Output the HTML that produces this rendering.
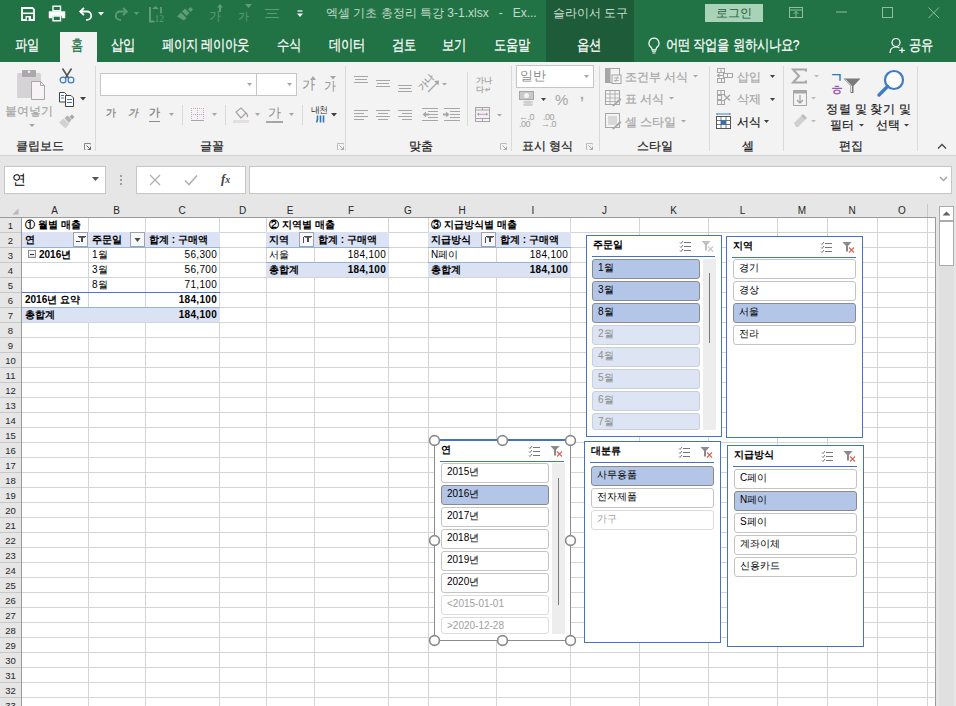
<!DOCTYPE html><html><head><meta charset="utf-8"><style>
*{margin:0;padding:0;box-sizing:border-box}
html,body{width:956px;height:706px;overflow:hidden;background:#e6e6e6;font-family:"Liberation Sans",sans-serif;color:#000}
.ab{position:absolute}
.t{position:absolute;white-space:nowrap;line-height:1}
#title{left:0;top:0;width:956px;height:62px;background:#217346}
.tab{position:absolute;top:38px;color:#fff;font-size:12px;white-space:nowrap;line-height:14px;transform:scaleY(1.22);transform-origin:50% 58%;-webkit-text-stroke:0.2px currentColor}
#ribbon{left:0;top:62px;width:956px;height:94px;background:#f3f3f3;border-bottom:1px solid #d4d4d4}
.rl{position:absolute;color:#1a1a1a;font-size:12px;white-space:nowrap;line-height:14px;-webkit-text-stroke:0.2px currentColor}
.dis{color:#a6a6a6}
.sep{position:absolute;width:1px;background:#dadada}
.hdr{position:absolute;background:#e6e6e6;color:#262626;font-size:10px;text-align:center;line-height:13px}
.cell{position:absolute;font-size:10px;line-height:15px;white-space:nowrap;color:#000}
.b{font-weight:bold}
.slicer{position:absolute;background:#fff;border:1px solid #4472c4}
.sh{position:absolute;left:6px;top:5px;font-size:11px;font-weight:bold;line-height:12px}
.sul{position:absolute;height:1px;background:#4472c4}
.item{position:absolute;height:20px;border:1px solid #c4c4c4;border-radius:3px;background:#fff;font-size:10px;line-height:16px;padding-left:5px;white-space:nowrap}
.sel{background:#b4c6e7;border-color:#8b8b8b}
.nod{background:#dde4f3;border-color:#c9cfdc;color:#8e8e8e}
.nodw{background:#fff;border-color:#dcdcdc;color:#a0a0a0}
.handle{position:absolute;width:11px;height:11px;border:1.5px solid #8c8c8c;border-radius:50%;background:#fff}
</style></head><body>
<div id="title" class="ab"></div>
<div class="ab" style="left:546px;top:0;width:88px;height:62px;background:#1e5c39"></div>
<div class="ab" style="left:60px;top:32px;width:37px;height:30px;background:#f3f3f3"></div>
<div class="tab" style="left:15px;color:#fff">파일</div>
<div class="tab" style="left:71px;color:#217346">홈</div>
<div class="tab" style="left:111px;color:#fff">삽입</div>
<div class="tab" style="left:162px;color:#fff">페이지 레이아웃</div>
<div class="tab" style="left:277px;color:#fff">수식</div>
<div class="tab" style="left:329px;color:#fff">데이터</div>
<div class="tab" style="left:392px;color:#fff">검토</div>
<div class="tab" style="left:442px;color:#fff">보기</div>
<div class="tab" style="left:494px;color:#fff">도움말</div>
<div class="tab" style="left:577px;color:#fff">옵션</div>
<div class="tab" style="left:666px;">어떤 작업을 원하시나요?</div>
<div class="tab" style="left:909px;">공유</div>
<div class="t" style="left:326px;top:7px;font-size:12px;color:#c4dacb">엑셀 기초 총정리 특강 3-1.xlsx&nbsp;&nbsp; -&nbsp;&nbsp; Ex...</div>
<div class="t" style="left:553px;top:7px;font-size:12px;color:#c9dccf">슬라이서 도구</div>
<div class="ab" style="left:705px;top:4px;width:58px;height:18px;background:#a9d3b9"></div>
<div class="t" style="left:716px;top:7px;font-size:12px;color:#1e5c39">로그인</div>
<div id="ribbon" class="ab"></div>
<div class="rl" style="left:16px;top:139px">클립보드</div>
<div class="rl" style="left:200px;top:139px">글꼴</div>
<div class="rl" style="left:409px;top:139px">맞춤</div>
<div class="rl" style="left:522px;top:139px">표시 형식</div>
<div class="rl" style="left:637px;top:139px">스타일</div>
<div class="rl" style="left:742px;top:139px">셀</div>
<div class="rl" style="left:839px;top:139px">편집</div>
<div class="sep" style="left:95px;top:66px;height:85px"></div>
<div class="sep" style="left:345px;top:66px;height:85px"></div>
<div class="sep" style="left:511px;top:66px;height:85px"></div>
<div class="sep" style="left:599px;top:66px;height:85px"></div>
<div class="sep" style="left:709px;top:66px;height:85px"></div>
<div class="sep" style="left:783px;top:66px;height:85px"></div>
<div class="sep" style="left:917px;top:66px;height:85px"></div>
<svg class="ab" style="left:20px;top:6px" width="16" height="16" viewBox="0 0 16 16"><path d="M2 2h10.5l1.5 1.5V14H2z" fill="none" stroke="#fff" stroke-width="1.8"/><path d="M3 7.3h10" stroke="#fff" stroke-width="1.6"/><rect x="5.5" y="10" width="5.5" height="4.5" fill="#fff"/><rect x="6.8" y="11.3" width="1.8" height="3.2" fill="#217346"/></svg>
<svg class="ab" style="left:48px;top:5px" width="18" height="17" viewBox="0 0 18 17"><rect x="5" y="1.2" width="7.5" height="4.5" fill="none" stroke="#fff" stroke-width="1.4"/><path d="M1 6.5h16v6.5h-3v-2.5H4V13H1z" fill="#fff" stroke="#fff" stroke-width="0.5" stroke-linejoin="round"/><rect x="5" y="11" width="7.5" height="4.8" fill="none" stroke="#fff" stroke-width="1.4"/></svg>
<svg class="ab" style="left:78px;top:6px" width="16" height="15" viewBox="0 0 16 15"><path d="M2.5 5.5h6.5a4.2 4.2 0 0 1 0 8.4H8" fill="none" stroke="#fff" stroke-width="1.8"/><path d="M6 1.8L2.2 5.5L6 9.2" fill="none" stroke="#fff" stroke-width="1.8"/></svg>
<svg class="ab" style="left:98px;top:12px" width="7" height="4" viewBox="0 0 7 4"><path d="M0 0h6L3 3.5z" fill="#fff"/></svg>
<svg class="ab" style="left:113px;top:6px" width="16" height="15" viewBox="0 0 16 15"><path d="M13.5 5.5H7a4.2 4.2 0 0 0 0 8.4h1" fill="none" stroke="#5e9d77" stroke-width="1.8"/><path d="M10 1.8l3.8 3.7L10 9.2" fill="none" stroke="#5e9d77" stroke-width="1.8"/></svg>
<svg class="ab" style="left:134px;top:12px" width="6" height="4" viewBox="0 0 6 4"><path d="M0 0h5L2.5 3z" fill="#5e9d77"/></svg>
<svg class="ab" style="left:148px;top:5px" width="18" height="18" viewBox="0 0 18 18"><path d="M2 2v14.5h4.5" fill="none" stroke="#5e9d77" stroke-width="2"/><path d="M4 4l3.5-3 3.5 3z" fill="#5e9d77"/><path d="M13 2v6.5" stroke="#5e9d77" stroke-width="1.8"/><text x="6.5" y="17" font-size="9.5" fill="#5e9d77" font-family="Liberation Serif">12</text></svg>
<svg class="ab" style="left:176px;top:6px" width="19" height="15" viewBox="0 0 19 15"><path d="M1 10.5L5 6.5 10.5 12 8 14.5z" fill="#5e9d77"/><path d="M6 5.5L9 2.5 13.5 7 10.5 10z" fill="#5e9d77"/><path d="M12 3.5L14.5 1 17 3.5 14.5 6z" fill="#5e9d77"/></svg>
<div class="t" style="left:209px;top:10px;font-size:12px;color:#5e9d77">가</div>
<svg class="ab" style="left:217px;top:4px" width="6" height="8" viewBox="0 0 6 8"><path d="M3 0L6 3.5H4V8H2V3.5H0z" fill="#5e9d77"/></svg>
<div class="t" style="left:238px;top:11px;font-size:11px;color:#5e9d77">가</div>
<svg class="ab" style="left:245px;top:4px" width="7" height="5" viewBox="0 0 7 5"><path d="M0 0h7L3.5 4z" fill="#5e9d77"/></svg>
<svg class="ab" style="left:264px;top:8px" width="16" height="12" viewBox="0 0 16 12"><path d="M1 1.5h14M3 5.5h10M1 9.5h14" stroke="#5e9d77" stroke-width="1.2"/></svg>
<svg class="ab" style="left:296px;top:10px" width="8" height="8" viewBox="0 0 8 8"><path d="M1.5 1h5" stroke="#fff" stroke-width="1.2"/><path d="M1 3.5h6L4 7z" fill="#fff"/></svg>
<svg class="ab" style="left:789px;top:7px" width="14" height="11" viewBox="0 0 14 11"><rect x="0.5" y="0.5" width="13" height="10" fill="none" stroke="#8fbf9f"/><path d="M0.5 3h13M7 10V4.5M4.8 6.8L7 4.5l2.2 2.3" fill="none" stroke="#8fbf9f"/></svg>
<svg class="ab" style="left:836px;top:11px" width="12" height="2" viewBox="0 0 12 2"><path d="M0 1h11" stroke="#8fbf9f" stroke-width="1"/></svg>
<svg class="ab" style="left:882px;top:7px" width="11" height="11" viewBox="0 0 11 11"><rect x="0.5" y="0.5" width="10" height="10" fill="none" stroke="#8fbf9f"/></svg>
<svg class="ab" style="left:928px;top:7px" width="12" height="12" viewBox="0 0 12 12"><path d="M0.5 0.5l10.5 10.5M11 0.5L0.5 11" stroke="#8fbf9f" stroke-width="1"/></svg>
<svg class="ab" style="left:647px;top:37px" width="14" height="17" viewBox="0 0 14 17"><path d="M7 1.2a5 5 0 0 0-3 9c.8.8 1 1.6 1 2.6h4c0-1 .2-1.8 1-2.6a5 5 0 0 0-3-9z" fill="none" stroke="#fff" stroke-width="1.2"/><path d="M5 14.2h4M5.5 16h3" stroke="#fff" stroke-width="1.1"/></svg>
<svg class="ab" style="left:889px;top:37px" width="17" height="17" viewBox="0 0 17 17"><circle cx="7" cy="5.5" r="4" fill="none" stroke="#fff" stroke-width="1.2"/><path d="M1 16c0-4 2.5-6 6-6 1.5 0 2.6.4 3.4 1" fill="none" stroke="#fff" stroke-width="1.2"/><path d="M13 10.5v5.5M10.2 13.3h5.6" stroke="#fff" stroke-width="1.2"/></svg>
<svg class="ab" style="left:16px;top:69px" width="30" height="32" viewBox="0 0 30 32"><rect x="1" y="4" width="24" height="25" rx="1.5" fill="#d6d3d6"/><rect x="6" y="1" width="14" height="7" rx="1" fill="#aaa8aa"/><circle cx="13" cy="2.8" r="1.2" fill="#f3f3f3"/><path d="M15.5 12.5h9l4 4v14h-13z" fill="#f6f2f6" stroke="#a8a6a8" stroke-width="1"/><path d="M24.5 12.5v4h4" fill="none" stroke="#a8a6a8" stroke-width="1"/></svg>
<div class="rl dis" style="left:5px;top:104px">붙여넣기</div>
<svg class="ab" style="left:29px;top:124px" width="6" height="4" viewBox="0 0 6 4"><path d="M0 0h6L3 3z" fill="#a6a6a6"/></svg>
<svg class="ab" style="left:59px;top:68px" width="16" height="16" viewBox="0 0 16 16"><path d="M3.5 0.5L9.5 10M12.5 0.5L6.5 10" stroke="#555" stroke-width="1.6"/><circle cx="4" cy="12" r="2.9" fill="none" stroke="#3a7bc8" stroke-width="1.2"/><circle cx="12" cy="12" r="2.9" fill="none" stroke="#3a7bc8" stroke-width="1.2"/></svg>
<svg class="ab" style="left:58px;top:91px" width="17" height="16" viewBox="0 0 17 16"><path d="M1.5 1.5h5l2 2v7.5h-7z" fill="#fff" stroke="#404040" stroke-width="1"/><path d="M3 4.5h3M3 7h3" stroke="#3a7bc8" stroke-width="1"/><path d="M7.5 4.5h5.5l2.5 2.5v8.5h-8z" fill="#fff" stroke="#404040" stroke-width="1"/><path d="M9 8.5h5M9 11.5h5" stroke="#3a7bc8" stroke-width="1"/></svg>
<svg class="ab" style="left:80px;top:97px" width="7" height="5" viewBox="0 0 7 5"><path d="M0 0h6L3 3.5z" fill="#404040"/></svg>
<svg class="ab" style="left:58px;top:114px" width="18" height="16" viewBox="0 0 18 16"><path d="M1 8.5L5.5 4.5 11 10 7.5 14.5z" fill="#d2d0d2"/><path d="M6.5 4L9.5 1.5 13.5 5.5 11 9z" fill="#b4b2b4"/><path d="M11.5 2.5L14 0.5 16.5 3 14 5.5z" fill="#a8a6a8"/></svg>
<svg class="ab" style="left:84px;top:143px" width="8" height="8" viewBox="0 0 8 8"><path d="M0.5 0.5h6v1M0.5 0.5v6h1" fill="none" stroke="#888" stroke-width="1"/><path d="M2.5 2.5l4 4M6.5 3.5v3h-3" fill="none" stroke="#666" stroke-width="1"/></svg>
<div class="ab" style="left:100px;top:73px;width:157px;height:23px;background:#fff;border:1px solid #c6c6c6"></div>
<div class="ab" style="left:256px;top:73px;width:41px;height:23px;background:#fff;border:1px solid #c6c6c6"></div>
<svg class="ab" style="left:247px;top:83px" width="6" height="4" viewBox="0 0 6 4"><path d="M0 0h5L2.5 3z" fill="#a6a6a6"/></svg>
<svg class="ab" style="left:287px;top:83px" width="6" height="4" viewBox="0 0 6 4"><path d="M0 0h5L2.5 3z" fill="#a6a6a6"/></svg>
<div class="t" style="left:302px;top:78px;font-size:13px;color:#8d8d8d">가</div>
<svg class="ab" style="left:310px;top:76px" width="6" height="5" viewBox="0 0 6 5"><path d="M3 0L6 4H0z" fill="#a6a6a6"/></svg>
<div class="t" style="left:324px;top:80px;font-size:12px;color:#8d8d8d">가</div>
<svg class="ab" style="left:330px;top:76px" width="7" height="4" viewBox="0 0 7 4"><path d="M0 0h6L3 3.5z" fill="#a6a6a6"/></svg>
<div class="t b" style="left:106px;top:108px;font-size:10px;color:#8d8d8d">가</div>
<div class="t b" style="left:128px;top:108px;font-size:10px;color:#8d8d8d;font-style:italic">가</div>
<div class="t b" style="left:149px;top:107px;font-size:11px;color:#8d8d8d">가</div>
<div class="ab" style="left:149px;top:121px;width:11px;height:1px;background:#8d8d8d"></div>
<svg class="ab" style="left:169px;top:113px" width="6" height="4" viewBox="0 0 6 4"><path d="M0 0h5L2.5 3z" fill="#a6a6a6"/></svg>
<svg class="ab" style="left:212px;top:113px" width="6" height="4" viewBox="0 0 6 4"><path d="M0 0h5L2.5 3z" fill="#a6a6a6"/></svg>
<svg class="ab" style="left:255px;top:113px" width="6" height="4" viewBox="0 0 6 4"><path d="M0 0h5L2.5 3z" fill="#a6a6a6"/></svg>
<svg class="ab" style="left:289px;top:113px" width="6" height="4" viewBox="0 0 6 4"><path d="M0 0h5L2.5 3z" fill="#a6a6a6"/></svg>
<div class="sep" style="left:182px;top:105px;height:20px"></div>
<div class="sep" style="left:225px;top:105px;height:20px"></div>
<div class="sep" style="left:302px;top:105px;height:20px"></div>
<svg class="ab" style="left:191px;top:108px" width="13" height="14" viewBox="0 0 13 14"><g fill="#c9a9c1"><rect x="0" y="0" width="1" height="1"/><rect x="0" y="2" width="1" height="1"/><rect x="0" y="4" width="1" height="1"/><rect x="0" y="6" width="1" height="1"/><rect x="0" y="8" width="1" height="1"/><rect x="0" y="10" width="1" height="1"/><rect x="0" y="12" width="1" height="1"/><rect x="2" y="0" width="1" height="1"/><rect x="2" y="6" width="1" height="1"/><rect x="2" y="12" width="1" height="1"/><rect x="4" y="0" width="1" height="1"/><rect x="4" y="6" width="1" height="1"/><rect x="4" y="12" width="1" height="1"/><rect x="6" y="0" width="1" height="1"/><rect x="6" y="2" width="1" height="1"/><rect x="6" y="4" width="1" height="1"/><rect x="6" y="6" width="1" height="1"/><rect x="6" y="8" width="1" height="1"/><rect x="6" y="10" width="1" height="1"/><rect x="6" y="12" width="1" height="1"/><rect x="8" y="0" width="1" height="1"/><rect x="8" y="6" width="1" height="1"/><rect x="8" y="12" width="1" height="1"/><rect x="10" y="0" width="1" height="1"/><rect x="10" y="6" width="1" height="1"/><rect x="10" y="12" width="1" height="1"/><rect x="12" y="0" width="1" height="1"/><rect x="12" y="2" width="1" height="1"/><rect x="12" y="4" width="1" height="1"/><rect x="12" y="6" width="1" height="1"/><rect x="12" y="8" width="1" height="1"/><rect x="12" y="10" width="1" height="1"/><rect x="12" y="12" width="1" height="1"/></g><rect x="0" y="12" width="13" height="1" fill="#a6a6a6"/></svg>
<svg class="ab" style="left:232px;top:107px" width="18" height="17" viewBox="0 0 18 17"><path d="M4 5l5-4 5 5-5 5z" fill="none" stroke="#a6a6a6" stroke-width="1.2"/><path d="M14 6c1.5 1.5 2 3 1 4" stroke="#a6a6a6" stroke-width="1.2" fill="none"/><rect x="1" y="13" width="16" height="3" fill="#e6dde4"/></svg>
<div class="t" style="left:268px;top:106px;font-size:13px;color:#8d8d8d">가</div>
<div class="ab" style="left:266px;top:121px;width:17px;height:2px;background:#a6a6a6"></div>
<div class="t" style="left:311px;top:106px;font-size:8.5px;color:#333;letter-spacing:-1px">내천</div>
<svg class="ab" style="left:316px;top:115px" width="9" height="8" viewBox="0 0 9 8"><path d="M1.5 0.5v4L0.5 7.5M4.5 0.5v7M7.5 0.5v7" fill="none" stroke="#2e75b6" stroke-width="1.6"/></svg>
<svg class="ab" style="left:331px;top:113px" width="7" height="4" viewBox="0 0 7 4"><path d="M0 0h6L3 3.5z" fill="#404040"/></svg>
<svg class="ab" style="left:337px;top:143px" width="8" height="8" viewBox="0 0 8 8"><path d="M0.5 0.5h6v1M0.5 0.5v6h1" fill="none" stroke="#bbb" stroke-width="1"/><path d="M2.5 2.5l4 4M6.5 3.5v3h-3" fill="none" stroke="#aaa" stroke-width="1"/></svg>
<div class="ab" style="left:354px;top:76px;width:14px;height:1px;background:#a6a6a6"></div>
<div class="ab" style="left:355px;top:79px;width:12px;height:1px;background:#a6a6a6"></div>
<div class="ab" style="left:354px;top:82px;width:14px;height:1px;background:#a6a6a6"></div>
<div class="ab" style="left:376px;top:80px;width:14px;height:1px;background:#a6a6a6"></div>
<div class="ab" style="left:377px;top:83px;width:12px;height:1px;background:#a6a6a6"></div>
<div class="ab" style="left:376px;top:86px;width:14px;height:1px;background:#a6a6a6"></div>
<div class="ab" style="left:398px;top:85px;width:14px;height:1px;background:#a6a6a6"></div>
<div class="ab" style="left:399px;top:88px;width:12px;height:1px;background:#a6a6a6"></div>
<div class="ab" style="left:398px;top:91px;width:14px;height:1px;background:#a6a6a6"></div>
<div class="ab" style="left:354px;top:110px;width:14px;height:1px;background:#a6a6a6"></div>
<div class="ab" style="left:354px;top:113px;width:10px;height:1px;background:#a6a6a6"></div>
<div class="ab" style="left:354px;top:116px;width:14px;height:1px;background:#a6a6a6"></div>
<div class="ab" style="left:354px;top:119px;width:10px;height:1px;background:#a6a6a6"></div>
<div class="ab" style="left:376px;top:110px;width:14px;height:1px;background:#a6a6a6"></div>
<div class="ab" style="left:378px;top:113px;width:10px;height:1px;background:#a6a6a6"></div>
<div class="ab" style="left:376px;top:116px;width:14px;height:1px;background:#a6a6a6"></div>
<div class="ab" style="left:378px;top:119px;width:10px;height:1px;background:#a6a6a6"></div>
<div class="ab" style="left:398px;top:110px;width:14px;height:1px;background:#a6a6a6"></div>
<div class="ab" style="left:402px;top:113px;width:10px;height:1px;background:#a6a6a6"></div>
<div class="ab" style="left:398px;top:116px;width:14px;height:1px;background:#a6a6a6"></div>
<div class="ab" style="left:402px;top:119px;width:10px;height:1px;background:#a6a6a6"></div>
<div class="ab" style="left:422px;top:108px;width:16px;height:1px;background:#a6a6a6"></div>
<div class="ab" style="left:428px;top:111px;width:10px;height:1px;background:#a6a6a6"></div>
<div class="ab" style="left:428px;top:114px;width:10px;height:1px;background:#a6a6a6"></div>
<div class="ab" style="left:428px;top:117px;width:10px;height:1px;background:#a6a6a6"></div>
<div class="ab" style="left:422px;top:120px;width:16px;height:1px;background:#a6a6a6"></div>
<svg class="ab" style="left:422px;top:110px" width="7" height="9" viewBox="0 0 7 9"><path d="M0.5 4.5L4 1.5v2h3v2H4v2z" fill="#a6a6a6"/></svg>
<div class="ab" style="left:444px;top:108px;width:16px;height:1px;background:#a6a6a6"></div>
<div class="ab" style="left:450px;top:111px;width:10px;height:1px;background:#a6a6a6"></div>
<div class="ab" style="left:450px;top:114px;width:10px;height:1px;background:#a6a6a6"></div>
<div class="ab" style="left:450px;top:117px;width:10px;height:1px;background:#a6a6a6"></div>
<div class="ab" style="left:444px;top:120px;width:16px;height:1px;background:#a6a6a6"></div>
<svg class="ab" style="left:443px;top:110px" width="7" height="9" viewBox="0 0 7 9"><path d="M6.5 4.5L3 1.5v2H0v2h3v2z" fill="#a6a6a6"/></svg>
<div class="t" style="left:423px;top:83px;font-size:9px;font-weight:bold;color:#a6a6a6;transform:rotate(-45deg);transform-origin:0 100%">가나</div>
<svg class="ab" style="left:427px;top:79px" width="13" height="14" viewBox="0 0 13 14"><path d="M1 13L11 3" stroke="#a6a6a6" stroke-width="1.3" fill="none"/><path d="M12 1.5L11.5 6.5 7 2z" fill="#a6a6a6"/></svg>
<svg class="ab" style="left:442px;top:83px" width="6" height="3" viewBox="0 0 6 3"><path d="M0 0h5L2.5 2.5z" fill="#a6a6a6"/></svg>
<div class="t b" style="left:476px;top:76px;font-size:8px;color:#a6a6a6;line-height:9px">가나<br>다<span style="font-size:7px;margin-left:1px">↵</span></div>
<div class="sep" style="left:467px;top:72px;height:54px"></div>
<svg class="ab" style="left:475px;top:107px" width="16" height="16" viewBox="0 0 16 16"><rect x="0.5" y="0.5" width="14" height="14" fill="#f6eef6" stroke="#a6a6a6"/><path d="M0.5 3h14M0.5 11.5h14M7.5 0.5v2.5M7.5 11.5v3" fill="none" stroke="#a6a6a6"/><path d="M2.5 7.25h10" stroke="#a6a6a6"/><path d="M2 7.25l2-1.8v3.6zM13 7.25l-2-1.8v3.6z" fill="#a6a6a6"/></svg>
<svg class="ab" style="left:497px;top:114px" width="6" height="3" viewBox="0 0 6 3"><path d="M0 0h5L2.5 2.5z" fill="#a6a6a6"/></svg>
<svg class="ab" style="left:500px;top:143px" width="8" height="8" viewBox="0 0 8 8"><path d="M0.5 0.5h6v1M0.5 0.5v6h1" fill="none" stroke="#bbb" stroke-width="1"/><path d="M2.5 2.5l4 4M6.5 3.5v3h-3" fill="none" stroke="#aaa" stroke-width="1"/></svg>
<div class="ab" style="left:516px;top:65px;width:78px;height:23px;background:#fff;border:1px solid #c6c6c6"></div>
<div class="t" style="left:520px;top:69px;font-size:13px;color:#8d8d8d">일반</div>
<svg class="ab" style="left:584px;top:75px" width="6" height="4" viewBox="0 0 6 4"><path d="M0 0h5L2.5 3z" fill="#a6a6a6"/></svg>
<svg class="ab" style="left:519px;top:91px" width="17" height="16" viewBox="0 0 17 16"><rect x="0.5" y="0.5" width="14" height="8" fill="#c8c8c8" stroke="#a6a6a6"/><circle cx="7.5" cy="4.5" r="2.5" fill="#f3f3f3"/><ellipse cx="9" cy="11" rx="5" ry="1.5" fill="#d0d0d0"/><ellipse cx="9" cy="13.5" rx="5" ry="1.5" fill="#d0d0d0"/></svg>
<svg class="ab" style="left:541px;top:98px" width="6" height="4" viewBox="0 0 6 4"><path d="M0 0h5L2.5 3z" fill="#404040"/></svg>
<div class="t" style="left:555px;top:92px;font-size:15px;color:#a6a6a6">%</div>
<div class="t b" style="left:580px;top:87px;font-size:14px;color:#a6a6a6">,</div>
<div class="t" style="left:519px;top:114px;font-size:9px;color:#a0a0a0;line-height:7px;letter-spacing:-0.5px">←.0<br>.00</div>
<div class="t" style="left:541px;top:114px;font-size:9px;color:#a0a0a0;line-height:7px;letter-spacing:-0.5px">&nbsp;.00<br>→.0</div>
<svg class="ab" style="left:586px;top:143px" width="8" height="8" viewBox="0 0 8 8"><path d="M0.5 0.5h6v1M0.5 0.5v6h1" fill="none" stroke="#bbb" stroke-width="1"/><path d="M2.5 2.5l4 4M6.5 3.5v3h-3" fill="none" stroke="#aaa" stroke-width="1"/></svg>
<svg class="ab" style="left:605px;top:68px" width="17" height="16" viewBox="0 0 17 16"><rect x="0.5" y="0.5" width="14" height="14" fill="#f3f3f3" stroke="#a6a6a6"/><rect x="0.5" y="0.5" width="5" height="14" fill="#a6a6a6"/><rect x="7" y="7" width="9" height="8.5" fill="#f3f3f3" stroke="#a6a6a6"/><path d="M9 10h5M9 12.5h5M12.5 8.5l-2 5.5" stroke="#a6a6a6" stroke-width="0.8"/></svg>
<div class="rl dis" style="left:625px;top:70px">조건부 서식</div>
<svg class="ab" style="left:693px;top:75px" width="6" height="3" viewBox="0 0 6 3"><path d="M0 0h5L2.5 2.5z" fill="#a6a6a6"/></svg>
<svg class="ab" style="left:605px;top:90px" width="17" height="17" viewBox="0 0 17 17"><rect x="0.5" y="0.5" width="14" height="14" fill="#f3f3f3" stroke="#a6a6a6"/><path d="M0.5 4h14M0.5 8h14M0.5 11.5h14M5 0.5v14M10 0.5v14" stroke="#a6a6a6" stroke-width="0.8"/><path d="M7 16l8-8 1.5 1.5-8 7z" fill="#a6a6a6"/></svg>
<div class="rl dis" style="left:625px;top:92px">표 서식</div>
<svg class="ab" style="left:669px;top:97px" width="6" height="3" viewBox="0 0 6 3"><path d="M0 0h5L2.5 2.5z" fill="#a6a6a6"/></svg>
<svg class="ab" style="left:605px;top:113px" width="17" height="17" viewBox="0 0 17 17"><rect x="0.5" y="0.5" width="14" height="14" fill="#f3f3f3" stroke="#a6a6a6"/><rect x="3" y="3" width="9" height="9" fill="#d8d8d8"/><path d="M7 16l8-8 1.5 1.5-8 7z" fill="#a6a6a6"/></svg>
<div class="rl dis" style="left:625px;top:115px">셀 스타일</div>
<svg class="ab" style="left:681px;top:120px" width="6" height="3" viewBox="0 0 6 3"><path d="M0 0h5L2.5 2.5z" fill="#a6a6a6"/></svg>
<svg class="ab" style="left:716px;top:68px" width="18" height="16" viewBox="0 0 18 16"><g fill="none" stroke="#a6a6a6" stroke-width="1"><rect x="1.5" y="0.5" width="7" height="4"/><rect x="1.5" y="10.5" width="4" height="4"/><rect x="5.5" y="10.5" width="3" height="4"/><rect x="7.5" y="5.5" width="4" height="4"/><rect x="11.5" y="5.5" width="5" height="4"/><path d="M5 1v3.5"/></g><path d="M0.5 7.5L3.5 5v5z" fill="#a6a6a6"/><path d="M3 7.5h4.5" stroke="#a6a6a6"/></svg>
<div class="rl dis" style="left:737px;top:70px">삽입</div>
<svg class="ab" style="left:770px;top:75px" width="6" height="4" viewBox="0 0 6 4"><path d="M0 0h5L2.5 3z" fill="#404040"/></svg>
<svg class="ab" style="left:716px;top:90px" width="18" height="16" viewBox="0 0 18 16"><g fill="none" stroke="#a6a6a6" stroke-width="1"><rect x="1.5" y="0.5" width="7" height="4"/><rect x="1.5" y="10.5" width="4" height="4"/><rect x="5.5" y="10.5" width="3" height="4"/><rect x="1.5" y="5.5" width="4" height="4"/><path d="M5 1v3.5"/></g><path d="M8 5l6 5.5M14 5l-6 5.5" stroke="#a6a6a6" stroke-width="1.3"/></svg>
<div class="rl dis" style="left:737px;top:92px">삭제</div>
<svg class="ab" style="left:770px;top:98px" width="6" height="4" viewBox="0 0 6 4"><path d="M0 0h5L2.5 3z" fill="#404040"/></svg>
<svg class="ab" style="left:716px;top:113px" width="17" height="17" viewBox="0 0 17 17"><rect x="0.5" y="3.5" width="14" height="12" fill="#fff" stroke="#555"/><path d="M0.5 7.5h14M0.5 11.5h14M5 3.5v12M10 3.5v12" stroke="#555" stroke-width="0.8"/><rect x="5" y="7.5" width="5" height="4" fill="#2e75b6"/><path d="M1 1h13M1 0v2M14 0v2" stroke="#2e75b6" stroke-width="0.9"/></svg>
<div class="rl" style="left:737px;top:115px">서식</div>
<svg class="ab" style="left:764px;top:120px" width="6" height="4" viewBox="0 0 6 4"><path d="M0 0h5L2.5 3z" fill="#404040"/></svg>
<svg class="ab" style="left:791px;top:68px" width="17" height="16" viewBox="0 0 17 16"><path d="M15 3.5V1.5H2L8 8l-6 6.5h13v-2" fill="none" stroke="#a6a6a6" stroke-width="2" stroke-linejoin="miter"/></svg>
<svg class="ab" style="left:814px;top:75px" width="6" height="3" viewBox="0 0 6 3"><path d="M0 0h5L2.5 2.5z" fill="#bbb"/></svg>
<svg class="ab" style="left:793px;top:90px" width="14" height="17" viewBox="0 0 14 17"><rect x="0.5" y="0.5" width="13" height="15" fill="#f3f3f3" stroke="#a6a6a6"/><rect x="0.5" y="0.5" width="13" height="3" fill="#a6a6a6"/><path d="M7 5v8M4 10l3 3 3-3" fill="none" stroke="#a6a6a6" stroke-width="1.3"/></svg>
<svg class="ab" style="left:811px;top:97px" width="6" height="3" viewBox="0 0 6 3"><path d="M0 0h5L2.5 2.5z" fill="#bbb"/></svg>
<svg class="ab" style="left:793px;top:113px" width="14" height="15" viewBox="0 0 14 15"><path d="M1 10l7-7 4 4-7 7H3z" fill="#d0d0d0"/><path d="M8 3l2-2 4 4-2 2z" fill="#bcbcbc"/></svg>
<svg class="ab" style="left:811px;top:120px" width="6" height="3" viewBox="0 0 6 3"><path d="M0 0h5L2.5 2.5z" fill="#bbb"/></svg>
<div class="t b" style="left:830px;top:72px;font-size:13px;color:#2e75b6;line-height:12px">ㄱ</div>
<div class="t b" style="left:830px;top:84px;font-size:14px;color:#9b59b6;line-height:12px">ㅎ</div>
<svg class="ab" style="left:843px;top:78px" width="18" height="16" viewBox="0 0 18 16"><path d="M0.5 0.5h17L10.5 8v7h-3V8z" fill="#7a7a7a"/><path d="M2.5 1.5L8.5 8v6" fill="none" stroke="#fff" stroke-width="0.8"/></svg>
<div class="rl" style="left:826px;top:102px;letter-spacing:0.5px">정렬 및</div>
<div class="rl" style="left:830px;top:118px">필터</div>
<svg class="ab" style="left:859px;top:124px" width="6" height="3" viewBox="0 0 6 3"><path d="M0 0h5L2.5 2.5z" fill="#404040"/></svg>
<svg class="ab" style="left:876px;top:69px" width="30" height="31" viewBox="0 0 30 31"><circle cx="18" cy="11" r="9" fill="#fff" stroke="#3b7cc4" stroke-width="2.2"/><path d="M11.5 17.5L3 26" stroke="#3b7cc4" stroke-width="3.4" stroke-linecap="round"/></svg>
<div class="rl" style="left:870px;top:102px;letter-spacing:0.5px">찾기 및</div>
<div class="rl" style="left:876px;top:118px">선택</div>
<svg class="ab" style="left:904px;top:124px" width="6" height="3" viewBox="0 0 6 3"><path d="M0 0h5L2.5 2.5z" fill="#404040"/></svg>
<svg class="ab" style="left:937px;top:143px" width="10" height="7" viewBox="0 0 10 7"><path d="M1 5.5l4-4 4 4" fill="none" stroke="#444" stroke-width="1.3"/></svg>
<div class="ab" style="left:4px;top:166px;width:102px;height:28px;background:#fff;border:1px solid #c6c6c6"></div>
<div class="t" style="left:12px;top:172px;font-size:14px;color:#000">연</div>
<div class="ab" style="left:136px;top:166px;width:110px;height:28px;background:#fff;border:1px solid #c6c6c6"></div>
<div class="ab" style="left:249px;top:166px;width:703px;height:28px;background:#fff;border:1px solid #c6c6c6"></div>
<svg class="ab" style="left:92px;top:177px" width="8" height="5" viewBox="0 0 8 5"><path d="M0 0h7L3.5 4z" fill="#555"/></svg>
<div class="ab" style="left:120px;top:175px;width:2px;height:2px;background:#a0a0a0"></div>
<div class="ab" style="left:120px;top:179px;width:2px;height:2px;background:#a0a0a0"></div>
<div class="ab" style="left:120px;top:183px;width:2px;height:2px;background:#a0a0a0"></div>
<svg class="ab" style="left:149px;top:174px" width="12" height="12" viewBox="0 0 12 12"><path d="M1 1l10 10M11 1L1 11" stroke="#b0b0b0" stroke-width="1.3"/></svg>
<svg class="ab" style="left:184px;top:174px" width="14" height="12" viewBox="0 0 14 12"><path d="M1 6.5l4 4L13 1.5" fill="none" stroke="#b0b0b0" stroke-width="1.6"/></svg>
<div class="t" style="left:221px;top:172px;font-size:13px;font-style:italic;font-family:'Liberation Serif',serif;color:#444;font-weight:bold">f<span style="font-size:10px">x</span></div>
<svg class="ab" style="left:939px;top:176px" width="9" height="6" viewBox="0 0 9 6"><path d="M1 1l3.5 3.5L8 1" fill="none" stroke="#a0a0a0" stroke-width="1.3"/></svg>
<div class="ab" style="left:0;top:204px;width:936px;height:502px;background:#fff"></div>
<div class="ab" style="left:0;top:204px;width:936px;height:13px;background:#e6e6e6"></div>
<div class="ab" style="left:0;top:217px;width:21px;height:489px;background:#e6e6e6"></div>
<div class="ab" style="left:21px;top:232px;width:914px;height:1px;background:#d4d4d4"></div>
<div class="ab" style="left:0;top:232px;width:21px;height:1px;background:#c8c8c8"></div>
<div class="ab" style="left:21px;top:247px;width:914px;height:1px;background:#d4d4d4"></div>
<div class="ab" style="left:0;top:247px;width:21px;height:1px;background:#c8c8c8"></div>
<div class="ab" style="left:21px;top:262px;width:914px;height:1px;background:#d4d4d4"></div>
<div class="ab" style="left:0;top:262px;width:21px;height:1px;background:#c8c8c8"></div>
<div class="ab" style="left:21px;top:277px;width:914px;height:1px;background:#d4d4d4"></div>
<div class="ab" style="left:0;top:277px;width:21px;height:1px;background:#c8c8c8"></div>
<div class="ab" style="left:21px;top:292px;width:914px;height:1px;background:#d4d4d4"></div>
<div class="ab" style="left:0;top:292px;width:21px;height:1px;background:#c8c8c8"></div>
<div class="ab" style="left:21px;top:307px;width:914px;height:1px;background:#d4d4d4"></div>
<div class="ab" style="left:0;top:307px;width:21px;height:1px;background:#c8c8c8"></div>
<div class="ab" style="left:21px;top:322px;width:914px;height:1px;background:#d4d4d4"></div>
<div class="ab" style="left:0;top:322px;width:21px;height:1px;background:#c8c8c8"></div>
<div class="ab" style="left:21px;top:337px;width:914px;height:1px;background:#d4d4d4"></div>
<div class="ab" style="left:0;top:337px;width:21px;height:1px;background:#c8c8c8"></div>
<div class="ab" style="left:21px;top:352px;width:914px;height:1px;background:#d4d4d4"></div>
<div class="ab" style="left:0;top:352px;width:21px;height:1px;background:#c8c8c8"></div>
<div class="ab" style="left:21px;top:367px;width:914px;height:1px;background:#d4d4d4"></div>
<div class="ab" style="left:0;top:367px;width:21px;height:1px;background:#c8c8c8"></div>
<div class="ab" style="left:21px;top:382px;width:914px;height:1px;background:#d4d4d4"></div>
<div class="ab" style="left:0;top:382px;width:21px;height:1px;background:#c8c8c8"></div>
<div class="ab" style="left:21px;top:397px;width:914px;height:1px;background:#d4d4d4"></div>
<div class="ab" style="left:0;top:397px;width:21px;height:1px;background:#c8c8c8"></div>
<div class="ab" style="left:21px;top:412px;width:914px;height:1px;background:#d4d4d4"></div>
<div class="ab" style="left:0;top:412px;width:21px;height:1px;background:#c8c8c8"></div>
<div class="ab" style="left:21px;top:427px;width:914px;height:1px;background:#d4d4d4"></div>
<div class="ab" style="left:0;top:427px;width:21px;height:1px;background:#c8c8c8"></div>
<div class="ab" style="left:21px;top:442px;width:914px;height:1px;background:#d4d4d4"></div>
<div class="ab" style="left:0;top:442px;width:21px;height:1px;background:#c8c8c8"></div>
<div class="ab" style="left:21px;top:457px;width:914px;height:1px;background:#d4d4d4"></div>
<div class="ab" style="left:0;top:457px;width:21px;height:1px;background:#c8c8c8"></div>
<div class="ab" style="left:21px;top:472px;width:914px;height:1px;background:#d4d4d4"></div>
<div class="ab" style="left:0;top:472px;width:21px;height:1px;background:#c8c8c8"></div>
<div class="ab" style="left:21px;top:487px;width:914px;height:1px;background:#d4d4d4"></div>
<div class="ab" style="left:0;top:487px;width:21px;height:1px;background:#c8c8c8"></div>
<div class="ab" style="left:21px;top:502px;width:914px;height:1px;background:#d4d4d4"></div>
<div class="ab" style="left:0;top:502px;width:21px;height:1px;background:#c8c8c8"></div>
<div class="ab" style="left:21px;top:517px;width:914px;height:1px;background:#d4d4d4"></div>
<div class="ab" style="left:0;top:517px;width:21px;height:1px;background:#c8c8c8"></div>
<div class="ab" style="left:21px;top:532px;width:914px;height:1px;background:#d4d4d4"></div>
<div class="ab" style="left:0;top:532px;width:21px;height:1px;background:#c8c8c8"></div>
<div class="ab" style="left:21px;top:547px;width:914px;height:1px;background:#d4d4d4"></div>
<div class="ab" style="left:0;top:547px;width:21px;height:1px;background:#c8c8c8"></div>
<div class="ab" style="left:21px;top:562px;width:914px;height:1px;background:#d4d4d4"></div>
<div class="ab" style="left:0;top:562px;width:21px;height:1px;background:#c8c8c8"></div>
<div class="ab" style="left:21px;top:577px;width:914px;height:1px;background:#d4d4d4"></div>
<div class="ab" style="left:0;top:577px;width:21px;height:1px;background:#c8c8c8"></div>
<div class="ab" style="left:21px;top:592px;width:914px;height:1px;background:#d4d4d4"></div>
<div class="ab" style="left:0;top:592px;width:21px;height:1px;background:#c8c8c8"></div>
<div class="ab" style="left:21px;top:607px;width:914px;height:1px;background:#d4d4d4"></div>
<div class="ab" style="left:0;top:607px;width:21px;height:1px;background:#c8c8c8"></div>
<div class="ab" style="left:21px;top:622px;width:914px;height:1px;background:#d4d4d4"></div>
<div class="ab" style="left:0;top:622px;width:21px;height:1px;background:#c8c8c8"></div>
<div class="ab" style="left:21px;top:637px;width:914px;height:1px;background:#d4d4d4"></div>
<div class="ab" style="left:0;top:637px;width:21px;height:1px;background:#c8c8c8"></div>
<div class="ab" style="left:21px;top:652px;width:914px;height:1px;background:#d4d4d4"></div>
<div class="ab" style="left:0;top:652px;width:21px;height:1px;background:#c8c8c8"></div>
<div class="ab" style="left:21px;top:667px;width:914px;height:1px;background:#d4d4d4"></div>
<div class="ab" style="left:0;top:667px;width:21px;height:1px;background:#c8c8c8"></div>
<div class="ab" style="left:21px;top:682px;width:914px;height:1px;background:#d4d4d4"></div>
<div class="ab" style="left:0;top:682px;width:21px;height:1px;background:#c8c8c8"></div>
<div class="ab" style="left:21px;top:697px;width:914px;height:1px;background:#d4d4d4"></div>
<div class="ab" style="left:0;top:697px;width:21px;height:1px;background:#c8c8c8"></div>
<div class="ab" style="left:88px;top:217px;width:1px;height:489px;background:#d4d4d4"></div>
<div class="ab" style="left:88px;top:204px;width:1px;height:13px;background:#c8c8c8"></div>
<div class="ab" style="left:145px;top:217px;width:1px;height:489px;background:#d4d4d4"></div>
<div class="ab" style="left:145px;top:204px;width:1px;height:13px;background:#c8c8c8"></div>
<div class="ab" style="left:219px;top:217px;width:1px;height:489px;background:#d4d4d4"></div>
<div class="ab" style="left:219px;top:204px;width:1px;height:13px;background:#c8c8c8"></div>
<div class="ab" style="left:266px;top:217px;width:1px;height:489px;background:#d4d4d4"></div>
<div class="ab" style="left:266px;top:204px;width:1px;height:13px;background:#c8c8c8"></div>
<div class="ab" style="left:314px;top:217px;width:1px;height:489px;background:#d4d4d4"></div>
<div class="ab" style="left:314px;top:204px;width:1px;height:13px;background:#c8c8c8"></div>
<div class="ab" style="left:388px;top:217px;width:1px;height:489px;background:#d4d4d4"></div>
<div class="ab" style="left:388px;top:204px;width:1px;height:13px;background:#c8c8c8"></div>
<div class="ab" style="left:428px;top:217px;width:1px;height:489px;background:#d4d4d4"></div>
<div class="ab" style="left:428px;top:204px;width:1px;height:13px;background:#c8c8c8"></div>
<div class="ab" style="left:496px;top:217px;width:1px;height:489px;background:#d4d4d4"></div>
<div class="ab" style="left:496px;top:204px;width:1px;height:13px;background:#c8c8c8"></div>
<div class="ab" style="left:570px;top:217px;width:1px;height:489px;background:#d4d4d4"></div>
<div class="ab" style="left:570px;top:204px;width:1px;height:13px;background:#c8c8c8"></div>
<div class="ab" style="left:639px;top:217px;width:1px;height:489px;background:#d4d4d4"></div>
<div class="ab" style="left:639px;top:204px;width:1px;height:13px;background:#c8c8c8"></div>
<div class="ab" style="left:708px;top:217px;width:1px;height:489px;background:#d4d4d4"></div>
<div class="ab" style="left:708px;top:204px;width:1px;height:13px;background:#c8c8c8"></div>
<div class="ab" style="left:777px;top:217px;width:1px;height:489px;background:#d4d4d4"></div>
<div class="ab" style="left:777px;top:204px;width:1px;height:13px;background:#c8c8c8"></div>
<div class="ab" style="left:827px;top:217px;width:1px;height:489px;background:#d4d4d4"></div>
<div class="ab" style="left:827px;top:204px;width:1px;height:13px;background:#c8c8c8"></div>
<div class="ab" style="left:877px;top:217px;width:1px;height:489px;background:#d4d4d4"></div>
<div class="ab" style="left:877px;top:204px;width:1px;height:13px;background:#c8c8c8"></div>
<div class="ab" style="left:927px;top:217px;width:1px;height:489px;background:#d4d4d4"></div>
<div class="ab" style="left:927px;top:204px;width:1px;height:13px;background:#c8c8c8"></div>
<div class="ab" style="left:0;top:217px;width:936px;height:1px;background:#9b9b9b"></div>
<div class="ab" style="left:21px;top:204px;width:1px;height:502px;background:#9b9b9b"></div>
<div class="ab" style="left:935px;top:217px;width:1px;height:489px;background:#9b9b9b"></div>
<div class="hdr" style="left:21px;top:204px;width:67px;height:13px">A</div>
<div class="hdr" style="left:88px;top:204px;width:57px;height:13px">B</div>
<div class="hdr" style="left:145px;top:204px;width:74px;height:13px">C</div>
<div class="hdr" style="left:219px;top:204px;width:47px;height:13px">D</div>
<div class="hdr" style="left:266px;top:204px;width:48px;height:13px">E</div>
<div class="hdr" style="left:314px;top:204px;width:74px;height:13px">F</div>
<div class="hdr" style="left:388px;top:204px;width:40px;height:13px">G</div>
<div class="hdr" style="left:428px;top:204px;width:68px;height:13px">H</div>
<div class="hdr" style="left:496px;top:204px;width:74px;height:13px">I</div>
<div class="hdr" style="left:570px;top:204px;width:69px;height:13px">J</div>
<div class="hdr" style="left:639px;top:204px;width:69px;height:13px">K</div>
<div class="hdr" style="left:708px;top:204px;width:69px;height:13px">L</div>
<div class="hdr" style="left:777px;top:204px;width:50px;height:13px">M</div>
<div class="hdr" style="left:827px;top:204px;width:50px;height:13px">N</div>
<div class="hdr" style="left:877px;top:204px;width:50px;height:13px">O</div>
<div class="hdr" style="left:0;top:219px;width:21px;height:13px;line-height:14px;font-size:9.5px">1</div>
<div class="hdr" style="left:0;top:234px;width:21px;height:13px;line-height:14px;font-size:9.5px">2</div>
<div class="hdr" style="left:0;top:249px;width:21px;height:13px;line-height:14px;font-size:9.5px">3</div>
<div class="hdr" style="left:0;top:264px;width:21px;height:13px;line-height:14px;font-size:9.5px">4</div>
<div class="hdr" style="left:0;top:279px;width:21px;height:13px;line-height:14px;font-size:9.5px">5</div>
<div class="hdr" style="left:0;top:294px;width:21px;height:13px;line-height:14px;font-size:9.5px">6</div>
<div class="hdr" style="left:0;top:309px;width:21px;height:13px;line-height:14px;font-size:9.5px">7</div>
<div class="hdr" style="left:0;top:324px;width:21px;height:13px;line-height:14px;font-size:9.5px">8</div>
<div class="hdr" style="left:0;top:339px;width:21px;height:13px;line-height:14px;font-size:9.5px">9</div>
<div class="hdr" style="left:0;top:354px;width:21px;height:13px;line-height:14px;font-size:9.5px">10</div>
<div class="hdr" style="left:0;top:369px;width:21px;height:13px;line-height:14px;font-size:9.5px">11</div>
<div class="hdr" style="left:0;top:384px;width:21px;height:13px;line-height:14px;font-size:9.5px">12</div>
<div class="hdr" style="left:0;top:399px;width:21px;height:13px;line-height:14px;font-size:9.5px">13</div>
<div class="hdr" style="left:0;top:414px;width:21px;height:13px;line-height:14px;font-size:9.5px">14</div>
<div class="hdr" style="left:0;top:429px;width:21px;height:13px;line-height:14px;font-size:9.5px">15</div>
<div class="hdr" style="left:0;top:444px;width:21px;height:13px;line-height:14px;font-size:9.5px">16</div>
<div class="hdr" style="left:0;top:459px;width:21px;height:13px;line-height:14px;font-size:9.5px">17</div>
<div class="hdr" style="left:0;top:474px;width:21px;height:13px;line-height:14px;font-size:9.5px">18</div>
<div class="hdr" style="left:0;top:489px;width:21px;height:13px;line-height:14px;font-size:9.5px">19</div>
<div class="hdr" style="left:0;top:504px;width:21px;height:13px;line-height:14px;font-size:9.5px">20</div>
<div class="hdr" style="left:0;top:519px;width:21px;height:13px;line-height:14px;font-size:9.5px">21</div>
<div class="hdr" style="left:0;top:534px;width:21px;height:13px;line-height:14px;font-size:9.5px">22</div>
<div class="hdr" style="left:0;top:549px;width:21px;height:13px;line-height:14px;font-size:9.5px">23</div>
<div class="hdr" style="left:0;top:564px;width:21px;height:13px;line-height:14px;font-size:9.5px">24</div>
<div class="hdr" style="left:0;top:579px;width:21px;height:13px;line-height:14px;font-size:9.5px">25</div>
<div class="hdr" style="left:0;top:594px;width:21px;height:13px;line-height:14px;font-size:9.5px">26</div>
<div class="hdr" style="left:0;top:609px;width:21px;height:13px;line-height:14px;font-size:9.5px">27</div>
<div class="hdr" style="left:0;top:624px;width:21px;height:13px;line-height:14px;font-size:9.5px">28</div>
<div class="hdr" style="left:0;top:639px;width:21px;height:13px;line-height:14px;font-size:9.5px">29</div>
<div class="hdr" style="left:0;top:654px;width:21px;height:13px;line-height:14px;font-size:9.5px">30</div>
<div class="hdr" style="left:0;top:669px;width:21px;height:13px;line-height:14px;font-size:9.5px">31</div>
<div class="hdr" style="left:0;top:684px;width:21px;height:13px;line-height:14px;font-size:9.5px">32</div>
<div class="hdr" style="left:0;top:699px;width:21px;height:13px;line-height:14px;font-size:9.5px">33</div>
<svg class="ab" style="left:12px;top:208px" width="7" height="7" viewBox="0 0 7 7"><path d="M6.5 0.5V6.5H0.5z" fill="#b8b8b8"/></svg>
<div class="ab" style="left:936px;top:204px;width:20px;height:502px;background:#e6e6e6"></div>
<div class="ab" style="left:939px;top:206px;width:15px;height:500px;background:#e0e0e0"></div>
<div class="ab" style="left:939px;top:206px;width:15px;height:15px;background:#fff;border:1px solid #ababab"></div>
<svg class="ab" style="left:942px;top:211px" width="9" height="5" viewBox="0 0 9 5"><path d="M0.5 4.5L4.5 0.5l4 4z" fill="#606060"/></svg>
<div class="ab" style="left:939px;top:221px;width:15px;height:45px;background:#fff;border:1px solid #ababab"></div>
<div class="ab" style="left:22px;top:232px;width:198px;height:15px;background:#dae2f3"></div>
<div class="ab" style="left:22px;top:307px;width:198px;height:15px;background:#dae2f3"></div>
<div class="ab" style="left:22px;top:247px;width:198px;height:1px;background:#95b3d7"></div>
<div class="ab" style="left:22px;top:292px;width:198px;height:1px;background:#4a78c8"></div>
<div class="ab" style="left:22px;top:307px;width:198px;height:1px;background:#95b3d7"></div>
<div class="ab" style="left:266px;top:232px;width:123px;height:15px;background:#dae2f3"></div>
<div class="ab" style="left:266px;top:262px;width:123px;height:15px;background:#dae2f3"></div>
<div class="ab" style="left:266px;top:247px;width:123px;height:1px;background:#95b3d7"></div>
<div class="ab" style="left:266px;top:262px;width:123px;height:1px;background:#95b3d7"></div>
<div class="ab" style="left:428px;top:232px;width:143px;height:15px;background:#dae2f3"></div>
<div class="ab" style="left:428px;top:262px;width:143px;height:15px;background:#dae2f3"></div>
<div class="ab" style="left:428px;top:247px;width:143px;height:1px;background:#95b3d7"></div>
<div class="ab" style="left:428px;top:262px;width:143px;height:1px;background:#95b3d7"></div>
<div class="ab" style="left:314px;top:218px;width:1px;height:14px;background:#fff"></div>
<div class="ab" style="left:496px;top:218px;width:1px;height:14px;background:#fff"></div>
<div class="cell b" style="left:25px;top:216.5px;">① 월별 매출</div>
<div class="cell b" style="left:269px;top:216.5px;">② 지역별 매출</div>
<div class="cell b" style="left:431px;top:216.5px;">③ 지급방식별 매출</div>
<div class="cell b" style="left:25px;top:231.5px;">연</div>
<div class="cell b" style="left:92px;top:231.5px;">주문일</div>
<div class="cell b" style="left:149px;top:231.5px;">합계 : 구매액</div>
<div class="cell b" style="left:269px;top:231.5px;">지역</div>
<div class="cell b" style="left:318px;top:231.5px;">합계 : 구매액</div>
<div class="cell b" style="left:431px;top:231.5px;">지급방식</div>
<div class="cell b" style="left:500px;top:231.5px;">합계 : 구매액</div>
<div class="cell b" style="left:39px;top:246.5px;">2016년</div>
<div class="cell " style="left:92px;top:246.5px;">1월</div>
<div class="cell " style="left:17px;top:246.5px;width:200px;text-align:right;letter-spacing:0.3px;">56,300</div>
<div class="cell " style="left:92px;top:261.5px;">3월</div>
<div class="cell " style="left:17px;top:261.5px;width:200px;text-align:right;letter-spacing:0.3px;">56,700</div>
<div class="cell " style="left:92px;top:276.5px;">8월</div>
<div class="cell " style="left:17px;top:276.5px;width:200px;text-align:right;letter-spacing:0.3px;">71,100</div>
<div class="cell b" style="left:25px;top:291.5px;">2016년 요약</div>
<div class="cell b" style="left:17px;top:291.5px;width:200px;text-align:right;letter-spacing:0.3px;">184,100</div>
<div class="cell b" style="left:25px;top:306.5px;">총합계</div>
<div class="cell b" style="left:17px;top:306.5px;width:200px;text-align:right;letter-spacing:0.3px;">184,100</div>
<div class="cell " style="left:269px;top:246.5px;">서울</div>
<div class="cell " style="left:186px;top:246.5px;width:200px;text-align:right;letter-spacing:0.3px;">184,100</div>
<div class="cell b" style="left:269px;top:261.5px;">총합계</div>
<div class="cell b" style="left:186px;top:261.5px;width:200px;text-align:right;letter-spacing:0.3px;">184,100</div>
<div class="cell " style="left:431px;top:246.5px;">N페이</div>
<div class="cell " style="left:368px;top:246.5px;width:200px;text-align:right;letter-spacing:0.3px;">184,100</div>
<div class="cell b" style="left:431px;top:261.5px;">총합계</div>
<div class="cell b" style="left:368px;top:261.5px;width:200px;text-align:right;letter-spacing:0.3px;">184,100</div>
<div class="ab" style="left:28px;top:250px;width:8px;height:8px;border:1px solid #8c8c8c;background:linear-gradient(#fff,#dde)"></div>
<div class="ab" style="left:30px;top:254px;width:4px;height:1px;background:#333"></div>
<div class="ab" style="left:73px;top:232px;width:15px;height:15px;border:1px solid #9ea3ab;background:#f7f8fb"></div>
<div class="ab" style="left:130px;top:232px;width:15px;height:15px;border:1px solid #9ea3ab;background:#f7f8fb"></div>
<div class="ab" style="left:299px;top:232px;width:15px;height:15px;border:1px solid #9ea3ab;background:#f7f8fb"></div>
<div class="ab" style="left:481px;top:232px;width:15px;height:15px;border:1px solid #9ea3ab;background:#f7f8fb"></div>
<svg class="ab" style="left:73px;top:232px" width="15" height="15" viewBox="0 0 15 15"><g fill="#4a4a4a"><rect x="5" y="4" width="8" height="1"/><rect x="6" y="5" width="6" height="1" opacity=".7"/><rect x="8" y="5" width="2" height="5"/><rect x="3" y="9" width="4" height="1"/></g></svg>
<svg class="ab" style="left:299px;top:232px" width="15" height="15" viewBox="0 0 15 15"><g fill="#4a4a4a"><rect x="5" y="4" width="8" height="1"/><rect x="6" y="5" width="6" height="1" opacity=".7"/><rect x="8" y="5" width="2" height="5"/><rect x="4" y="5" width="1" height="6"/></g></svg>
<svg class="ab" style="left:481px;top:232px" width="15" height="15" viewBox="0 0 15 15"><g fill="#4a4a4a"><rect x="5" y="4" width="8" height="1"/><rect x="6" y="5" width="6" height="1" opacity=".7"/><rect x="8" y="5" width="2" height="5"/><rect x="4" y="5" width="1" height="6"/></g></svg>
<svg class="ab" style="left:130px;top:232px" width="15" height="15" viewBox="0 0 15 15"><path d="M4.5 6h6L7.5 10z" fill="#4a4a4a"/></svg>
<div class="slicer" style="left:586px;top:235px;width:136px;height:202px;border-color:#4472c4"></div>
<div class="t b" style="left:593px;top:240px;font-size:10px">주문일</div>
<div class="sul" style="left:592px;top:256px;width:123px"></div>
<div class="item sel" style="left:592px;top:259px;width:108px;height:20px;overflow:hidden">1월</div>
<div class="item sel" style="left:592px;top:281px;width:108px;height:20px;overflow:hidden">3월</div>
<div class="item sel" style="left:592px;top:303px;width:108px;height:20px;overflow:hidden">8월</div>
<div class="item nod" style="left:592px;top:325px;width:108px;height:20px;overflow:hidden">2월</div>
<div class="item nod" style="left:592px;top:347px;width:108px;height:20px;overflow:hidden">4월</div>
<div class="item nod" style="left:592px;top:369px;width:108px;height:20px;overflow:hidden">5월</div>
<div class="item nod" style="left:592px;top:391px;width:108px;height:20px;overflow:hidden">6월</div>
<div class="item nod" style="left:592px;top:413px;width:108px;height:17px;overflow:hidden">7월</div>
<div class="ab" style="left:703px;top:259px;width:13px;height:171px;background:#ededed"></div>
<div class="ab" style="left:709px;top:273px;width:1px;height:70px;background:#7a7a7a"></div>
<svg class="ab" style="left:679px;top:240px" width="13" height="12" viewBox="0 0 13 12"><path d="M1 2.5l1 1L4 1M1 6.5l1 1L4 5M1 10.5l1 1L4 9" stroke="#666" fill="none" stroke-width="0.9"/><path d="M5 2.5h7M5 6.5h7M5 10.5h7" stroke="#777" stroke-width="1.1"/></svg>
<svg class="ab" style="left:701px;top:240px" width="13" height="12" viewBox="0 0 13 12"><path d="M0.5 1h9L6 5v5.5H4V5z" fill="#c0c0c0"/><path d="M7 6.5l5 5M12 6.5l-5 5" stroke="#c8c8c8" stroke-width="1.1"/></svg>
<div class="slicer" style="left:726px;top:236px;width:137px;height:202px;border-color:#4472c4"></div>
<div class="t b" style="left:733px;top:241px;font-size:10px">지역</div>
<div class="sul" style="left:732px;top:257px;width:124px"></div>
<div class="item" style="left:733px;top:259px;width:123px;height:20px;overflow:hidden">경기</div>
<div class="item" style="left:733px;top:281px;width:123px;height:20px;overflow:hidden">경상</div>
<div class="item sel" style="left:733px;top:303px;width:123px;height:20px;overflow:hidden">서울</div>
<div class="item" style="left:733px;top:325px;width:123px;height:20px;overflow:hidden">전라</div>
<svg class="ab" style="left:820px;top:241px" width="13" height="12" viewBox="0 0 13 12"><path d="M1 2.5l1 1L4 1M1 6.5l1 1L4 5M1 10.5l1 1L4 9" stroke="#666" fill="none" stroke-width="0.9"/><path d="M5 2.5h7M5 6.5h7M5 10.5h7" stroke="#777" stroke-width="1.1"/></svg>
<svg class="ab" style="left:842px;top:241px" width="13" height="12" viewBox="0 0 13 12"><path d="M0.5 1h9L6 5v5.5H4V5z" fill="#8a8a8a"/><path d="M7 6.5l5 5M12 6.5l-5 5" stroke="#e06050" stroke-width="1.1"/></svg>
<div class="slicer" style="left:434px;top:440px;width:137px;height:201px;border-color:#8c8c8c"></div>
<div class="t b" style="left:441px;top:445px;font-size:10px">연</div>
<div class="sul" style="left:440px;top:461px;width:124px"></div>
<div class="item" style="left:441px;top:463px;width:108px;height:20px;overflow:hidden">2015년</div>
<div class="item sel" style="left:441px;top:485px;width:108px;height:20px;overflow:hidden">2016년</div>
<div class="item" style="left:441px;top:507px;width:108px;height:20px;overflow:hidden">2017년</div>
<div class="item" style="left:441px;top:529px;width:108px;height:20px;overflow:hidden">2018년</div>
<div class="item" style="left:441px;top:551px;width:108px;height:20px;overflow:hidden">2019년</div>
<div class="item" style="left:441px;top:573px;width:108px;height:20px;overflow:hidden">2020년</div>
<div class="item nodw" style="left:441px;top:595px;width:108px;height:20px;overflow:hidden">&lt;2015-01-01</div>
<div class="item nodw" style="left:441px;top:617px;width:108px;height:17px;overflow:hidden">&gt;2020-12-28</div>
<div class="ab" style="left:552px;top:463px;width:13px;height:171px;background:#ededed"></div>
<div class="ab" style="left:558px;top:478px;width:1px;height:127px;background:#7a7a7a"></div>
<svg class="ab" style="left:528px;top:445px" width="13" height="12" viewBox="0 0 13 12"><path d="M1 2.5l1 1L4 1M1 6.5l1 1L4 5M1 10.5l1 1L4 9" stroke="#666" fill="none" stroke-width="0.9"/><path d="M5 2.5h7M5 6.5h7M5 10.5h7" stroke="#777" stroke-width="1.1"/></svg>
<svg class="ab" style="left:550px;top:445px" width="13" height="12" viewBox="0 0 13 12"><path d="M0.5 1h9L6 5v5.5H4V5z" fill="#8a8a8a"/><path d="M7 6.5l5 5M12 6.5l-5 5" stroke="#e06050" stroke-width="1.1"/></svg>
<div class="ab" style="left:434px;top:439px;width:137px;height:2px;background:#4472c4"></div>
<div class="slicer" style="left:584px;top:441px;width:137px;height:202px;border-color:#4472c4"></div>
<div class="t b" style="left:591px;top:446px;font-size:10px">대분류</div>
<div class="sul" style="left:590px;top:462px;width:124px"></div>
<div class="item sel" style="left:591px;top:466px;width:123px;height:20px;overflow:hidden">사무용품</div>
<div class="item" style="left:591px;top:488px;width:123px;height:20px;overflow:hidden">전자제품</div>
<div class="item nodw" style="left:591px;top:510px;width:123px;height:20px;overflow:hidden">가구</div>
<svg class="ab" style="left:678px;top:446px" width="13" height="12" viewBox="0 0 13 12"><path d="M1 2.5l1 1L4 1M1 6.5l1 1L4 5M1 10.5l1 1L4 9" stroke="#666" fill="none" stroke-width="0.9"/><path d="M5 2.5h7M5 6.5h7M5 10.5h7" stroke="#777" stroke-width="1.1"/></svg>
<svg class="ab" style="left:700px;top:446px" width="13" height="12" viewBox="0 0 13 12"><path d="M0.5 1h9L6 5v5.5H4V5z" fill="#8a8a8a"/><path d="M7 6.5l5 5M12 6.5l-5 5" stroke="#e06050" stroke-width="1.1"/></svg>
<div class="slicer" style="left:727px;top:445px;width:137px;height:202px;border-color:#4472c4"></div>
<div class="t b" style="left:734px;top:450px;font-size:10px">지급방식</div>
<div class="sul" style="left:733px;top:466px;width:124px"></div>
<div class="item" style="left:734px;top:469px;width:123px;height:20px;overflow:hidden">C페이</div>
<div class="item sel" style="left:734px;top:491px;width:123px;height:20px;overflow:hidden">N페이</div>
<div class="item" style="left:734px;top:513px;width:123px;height:20px;overflow:hidden">S페이</div>
<div class="item" style="left:734px;top:535px;width:123px;height:20px;overflow:hidden">계좌이체</div>
<div class="item" style="left:734px;top:557px;width:123px;height:20px;overflow:hidden">신용카드</div>
<svg class="ab" style="left:821px;top:450px" width="13" height="12" viewBox="0 0 13 12"><path d="M1 2.5l1 1L4 1M1 6.5l1 1L4 5M1 10.5l1 1L4 9" stroke="#666" fill="none" stroke-width="0.9"/><path d="M5 2.5h7M5 6.5h7M5 10.5h7" stroke="#777" stroke-width="1.1"/></svg>
<svg class="ab" style="left:843px;top:450px" width="13" height="12" viewBox="0 0 13 12"><path d="M0.5 1h9L6 5v5.5H4V5z" fill="#8a8a8a"/><path d="M7 6.5l5 5M12 6.5l-5 5" stroke="#e06050" stroke-width="1.1"/></svg>
<svg class="ab" style="left:428px;top:434px" width="13" height="13" viewBox="0 0 13 13"><circle cx="6.5" cy="6.5" r="4.9" fill="#fff" stroke="#8a8a8a" stroke-width="1.6"/></svg>
<svg class="ab" style="left:428px;top:534px" width="13" height="13" viewBox="0 0 13 13"><circle cx="6.5" cy="6.5" r="4.9" fill="#fff" stroke="#8a8a8a" stroke-width="1.6"/></svg>
<svg class="ab" style="left:428px;top:634px" width="13" height="13" viewBox="0 0 13 13"><circle cx="6.5" cy="6.5" r="4.9" fill="#fff" stroke="#8a8a8a" stroke-width="1.6"/></svg>
<svg class="ab" style="left:496px;top:434px" width="13" height="13" viewBox="0 0 13 13"><circle cx="6.5" cy="6.5" r="4.9" fill="#fff" stroke="#8a8a8a" stroke-width="1.6"/></svg>
<svg class="ab" style="left:496px;top:634px" width="13" height="13" viewBox="0 0 13 13"><circle cx="6.5" cy="6.5" r="4.9" fill="#fff" stroke="#8a8a8a" stroke-width="1.6"/></svg>
<svg class="ab" style="left:564px;top:434px" width="13" height="13" viewBox="0 0 13 13"><circle cx="6.5" cy="6.5" r="4.9" fill="#fff" stroke="#8a8a8a" stroke-width="1.6"/></svg>
<svg class="ab" style="left:564px;top:534px" width="13" height="13" viewBox="0 0 13 13"><circle cx="6.5" cy="6.5" r="4.9" fill="#fff" stroke="#8a8a8a" stroke-width="1.6"/></svg>
<svg class="ab" style="left:564px;top:634px" width="13" height="13" viewBox="0 0 13 13"><circle cx="6.5" cy="6.5" r="4.9" fill="#fff" stroke="#8a8a8a" stroke-width="1.6"/></svg>
</body></html>
